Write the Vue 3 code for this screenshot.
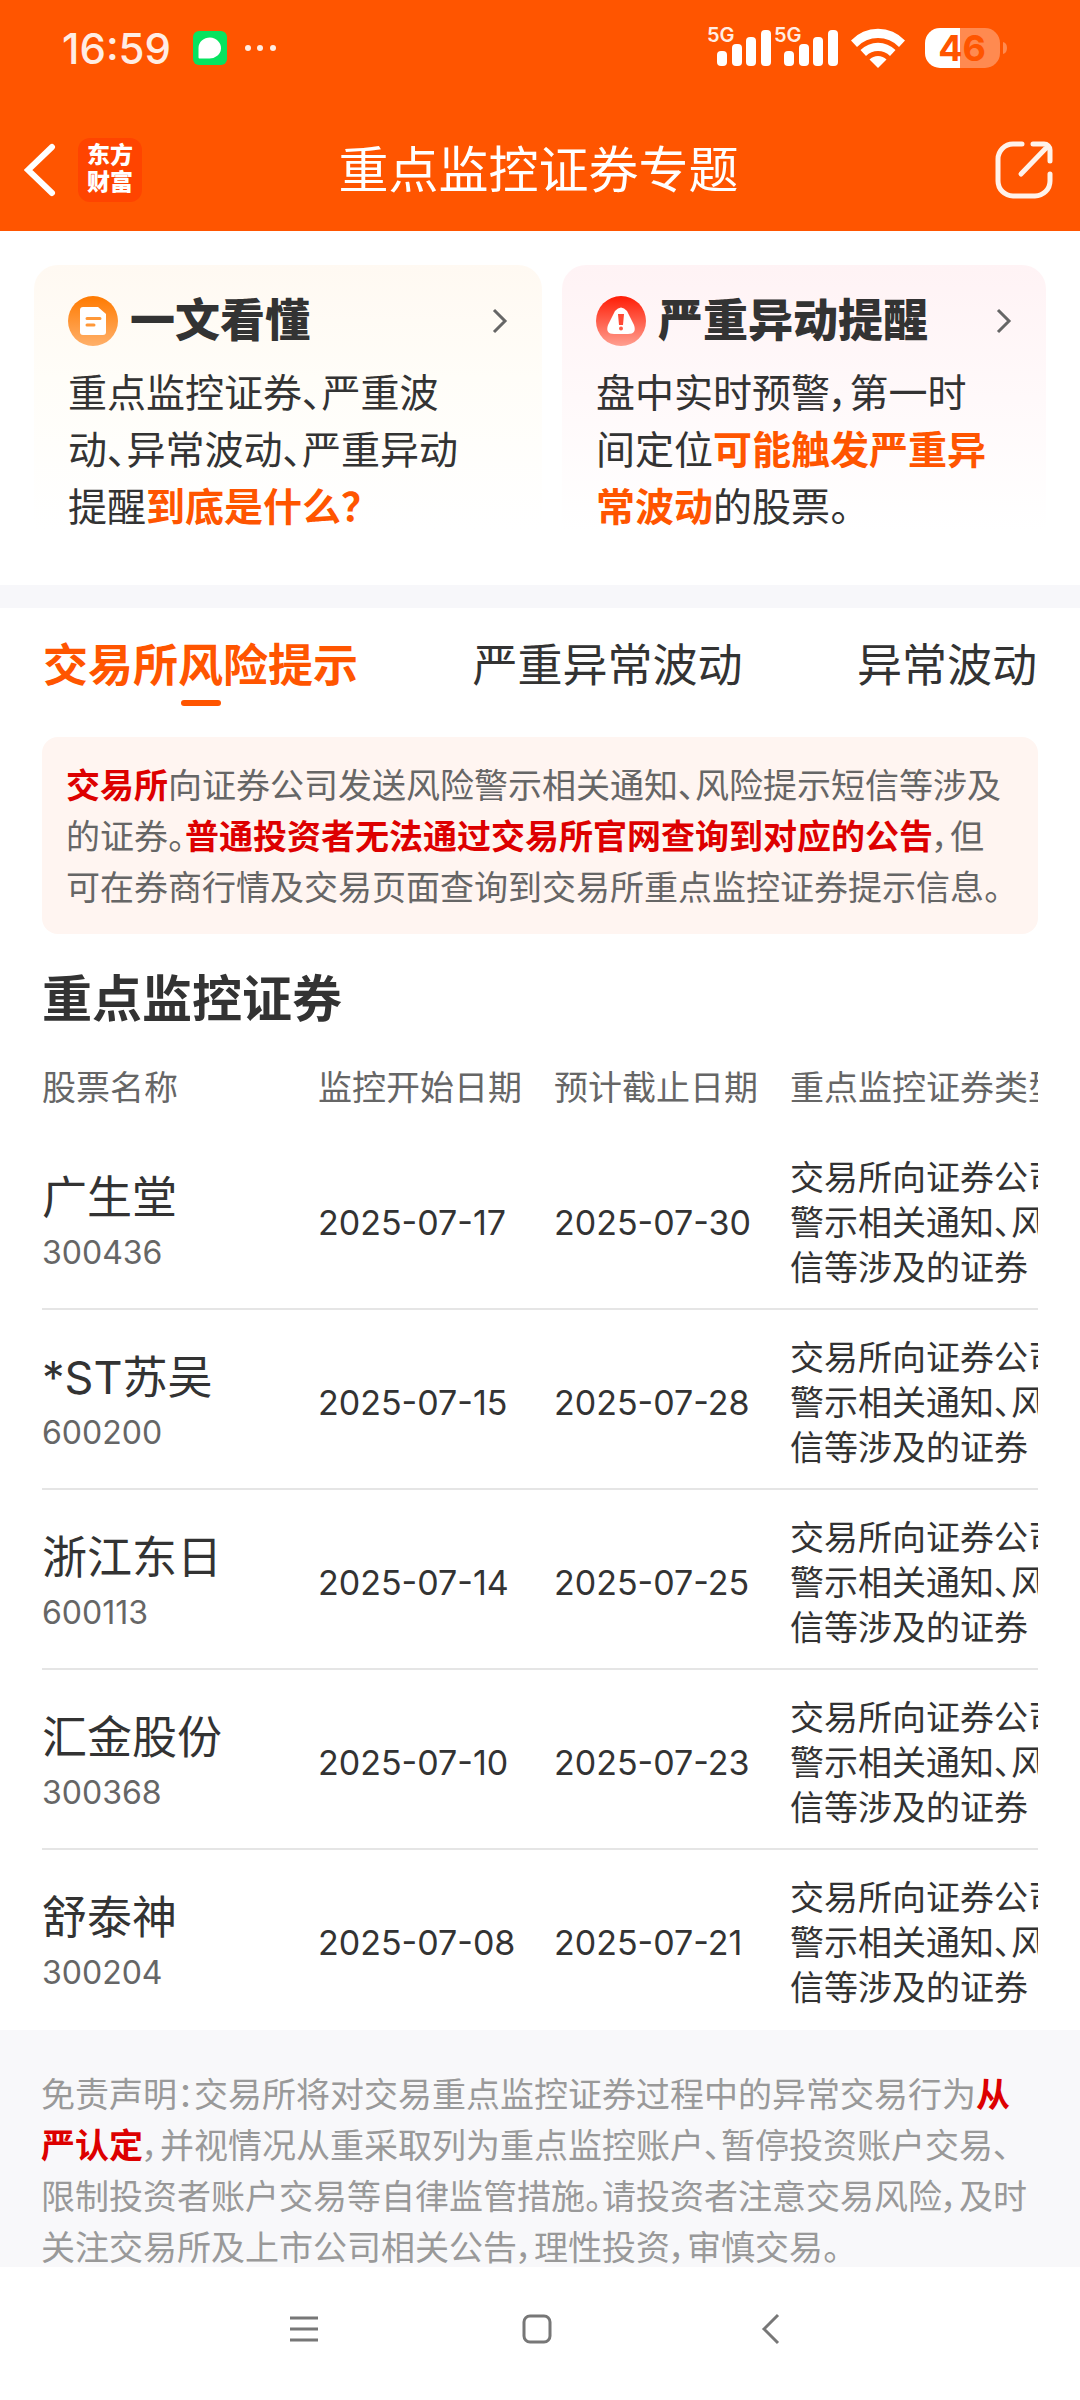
<template>
    <div class="app">
        <header class="header">
            <!-- Status bar -->
            <div class="status">
                <span class="time">16:59</span>
                <svg class="msg" viewBox="0 0 34 34">
                    <rect width="34" height="34" rx="6" fill="#06e35f" />
                    <path d="M17 6.500a11.500 10.500 0 1 1-1 21H6.500a1 1 0 0 1-1-1V17A11.500 10.500 0 0 1 17 6.500z" fill="#fff" />
                </svg>
                <svg class="dots" viewBox="0 0 34 8">
                    <circle cx="4" cy="4" r="3" />
                    <circle cx="16" cy="4" r="3" />
                    <circle cx="29" cy="4" r="3" />
                </svg>
                <div class="status-right">
                    <div v-for="i in 2" :key="i" class="signal">
                        <span>5G</span>
                        <svg viewBox="0 0 54 36">
                            <rect x="0" y="21" width="10" height="15" rx="4" />
                            <rect x="15" y="14" width="10" height="22" rx="4" />
                            <rect x="29" y="7" width="10" height="29" rx="4" />
                            <rect x="44" y="0" width="10" height="36" rx="4" />
                        </svg>
                    </div>
                    <svg class="wifi" viewBox="0 0 54 40">
                        <path d="M0 12.500a37 37 0 0 1 54 0l-6 6.500a29 29 0 0 0-42 0z" />
                        <path d="M9.500 22a25 25 0 0 1 35 0l-5.500 6a17 17 0 0 0-24 0z" />
                        <path d="M18.500 31.500a12 12 0 0 1 17 0L27 40z" />
                    </svg>
                    <svg class="battery" viewBox="0 0 83 40">
                        <path d="M35 0h25a15 15 0 0 1 15 15v10a15 15 0 0 1-15 15H35z" fill="#ff8a50" />
                        <path d="M35 0H15A15 15 0 0 0 0 15v10a15 15 0 0 0 15 15h20z" fill="#fff" />
                        <path d="M78 14q4 1 4 6t-4 6z" fill="#ff8a50" />
                        <text x="37" y="33" text-anchor="middle">46</text>
                    </svg>
                </div>
            </div>

            <div class="navbar">
                <div class="nav-left">
                    <button class="icon-btn" aria-label="返回">
                        <svg class="back" viewBox="0 0 32 54">
                            <path d="M28 4L4 27l24 23" />
                        </svg>
                    </button>
                    <span class="logo">东方<br />财富</span>
                </div>
                <h1>重点监控证券专题</h1>
                <button class="icon-btn share-btn" aria-label="分享">
                    <svg class="share" viewBox="0 0 58 58">
                        <path d="M27 3H18A15 15 0 0 0 3 18v22a15 15 0 0 0 15 15h22a15 15 0 0 0 15-15v-7" />
                        <path d="M38 3h11a6 6 0 0 1 6 6v11M53 5L26 33" />
                    </svg>
                </button>
            </div>
        </header>

        <main class="content">
            <section class="cards">
                <a href="#" class="card card-guide">
                    <div class="card-head">
                        <svg class="card-icon" viewBox="0 0 50 50">
                            <defs>
                                <linearGradient id="orange" x1="0" y1="0" x2="0" y2="1">
                                    <stop offset="0" stop-color="#ff7a00" />
                                    <stop offset="1" stop-color="#ffb06a" />
                                </linearGradient>
                            </defs>
                            <circle cx="25" cy="25" r="25" fill="url(#orange)" />
                            <path d="M15 11h15l8 7v18a3 3 0 0 1-3 3H15a3 3 0 0 1-3-3V14a3 3 0 0 1 3-3z" fill="#fff" />
                            <path d="M19 22.500h13M19 29h7" stroke="#ff9838" stroke-width="3" stroke-linecap="round" />
                        </svg>
                        <h2>一文看懂</h2>
                        <svg class="arrow" viewBox="0 0 16 26"><path d="M2 2l11 11L2 24" /></svg>
                    </div>
                    <p>重点监控证券、严重波动、异常波动、严重异动提醒<b>到底是什么？</b></p>
                </a>
                <a href="#" class="card card-alert">
                    <div class="card-head">
                        <svg class="card-icon" viewBox="0 0 50 50">
                            <defs>
                                <linearGradient id="red" x1="0" y1="0" x2="0" y2="1">
                                    <stop offset="0" stop-color="#ff1c05" />
                                    <stop offset="1" stop-color="#ff9f90" />
                                </linearGradient>
                            </defs>
                            <circle cx="25" cy="25" r="25" fill="url(#red)" />
                            <path d="M19 15q6-7 12 0l7 14q3 9-6 9H18q-9 0-6-9z" fill="#fff" />
                            <path d="M22 18h6l-1 11h-4z" fill="#ff4a35" />
                            <circle cx="25" cy="32.500" r="2" fill="#ff5a45" />
                        </svg>
                        <h2>严重异动提醒</h2>
                        <svg class="arrow" viewBox="0 0 16 26"><path d="M2 2l11 11L2 24" /></svg>
                    </div>
                    <p>盘中实时预警，第一时间定位<b>可能触发严重异常波动</b>的股票。</p>
                </a>
            </section>

            <nav class="tabs">
                <button
                    v-for="(tab, i) in tabs"
                    :key="tab"
                    :class="{ active: current === i }"
                    @click="current = i"
                >
                    {{ tab }}
                </button>
            </nav>

            <p class="notice">
                <b>交易所</b>向证券公司发送风险警示相关通知、风险提示短信等涉及的证券。<b>普通投资者无法通过交易所官网查询到对应的公告</b>，但可在券商行情及交易页面查询到交易所重点监控证券提示信息。
            </p>

            <section class="stocks">
                <h2>重点监控证券</h2>
                <div class="table-wrap">
                    <table>
                        <colgroup>
                            <col class="col-name" />
                            <col class="col-date" />
                            <col class="col-date" />
                            <col class="col-type" />
                        </colgroup>
                        <thead>
                            <tr>
                                <th>股票名称</th>
                                <th>监控开始日期</th>
                                <th>预计截止日期</th>
                                <th>重点监控证券类型</th>
                            </tr>
                        </thead>
                        <tbody>
                            <tr v-for="item in stocks" :key="item.code">
                                <td>
                                    <div class="name">{{ item.name }}</div>
                                    <div class="code">{{ item.code }}</div>
                                </td>
                                <td class="date">{{ item.start }}</td>
                                <td class="date">{{ item.end }}</td>
                                <td>{{ type }}</td>
                            </tr>
                        </tbody>
                    </table>
                </div>
            </section>

            <footer class="disclaimer">
                免责声明：交易所将对交易重点监控证券过程中的异常交易行为<b>从严认定</b>，并视情况从重采取列为重点监控账户、暂停投资账户交易、限制投资者账户交易等自律监管措施。请投资者注意交易风险，及时关注交易所及上市公司相关公告，理性投资，审慎交易。
            </footer>
        </main>

        <!-- System navigation -->
        <div class="sysbar">
            <button class="icon-btn" aria-label="菜单">
                <svg viewBox="0 0 32 32"><path d="M2 5h28M2 16h28M2 27h28" /></svg>
            </button>
            <button class="icon-btn" aria-label="主页">
                <svg viewBox="0 0 32 32"><rect x="3" y="3" width="26" height="26" rx="6" /></svg>
            </button>
            <button class="icon-btn" aria-label="返回上一页">
                <svg viewBox="0 0 32 32"><path d="M24 2L10 16l14 14" /></svg>
            </button>
        </div>
    </div>
</template>

<script setup>
import { ref } from "vue";

const tabs = ["交易所风险提示", "严重异常波动", "异常波动"];
const current = ref(0);

const type = "交易所向证券公司发送风险警示相关通知、风险提示短信等涉及的证券";

const stocks = [
    { name: "广生堂", code: "300436", start: "2025-07-17", end: "2025-07-30" },
    { name: "*ST苏吴", code: "600200", start: "2025-07-15", end: "2025-07-28" },
    { name: "浙江东日", code: "600113", start: "2025-07-14", end: "2025-07-25" },
    { name: "汇金股份", code: "300368", start: "2025-07-10", end: "2025-07-23" },
    { name: "舒泰神", code: "300204", start: "2025-07-08", end: "2025-07-21" },
];
</script>

<style>
body {
    margin: 0;
    background: #fff;
}
</style>

<style scoped>
.app {
    display: flex;
    flex-direction: column;
    height: 100vh;
    font-family: Inter, "Noto Sans CJK SC", sans-serif;
    font-feature-settings: "palt";
    font-size: 34px;
    color: #333;
}
h1,
h2,
p {
    margin: 0;
}
button {
    padding: 0;
    border: 0;
    background: none;
    font: inherit;
    font-feature-settings: inherit;
    color: inherit;
}
.icon-btn {
    display: flex;
    align-items: center;
    justify-content: center;
}

/* header */
.header {
    flex: none;
    background: #ff5500;
    color: #fff;
}
.status {
    display: flex;
    align-items: center;
    height: 96px;
    padding: 0 72px 0 62px;
}
.time {
    font-size: 42px;
    font-weight: 500;
    color: #ffede4;
}
.msg {
    width: 34px;
    height: 34px;
    margin-left: 22px;
}
.dots {
    width: 34px;
    height: 8px;
    margin-left: 17px;
    fill: #ffede4;
}
.status-right {
    display: flex;
    align-items: center;
    margin-left: auto;
}
.signal {
    position: relative;
    margin-right: 13px;
}
.signal svg {
    display: block;
    width: 54px;
    height: 36px;
    fill: #fff;
}
.signal span {
    position: absolute;
    top: -6px;
    left: -10px;
    font-size: 20px;
    line-height: 22px;
    font-weight: 600;
    color: #ffede4;
}
.wifi {
    width: 54px;
    height: 40px;
    fill: #fff;
}
.battery {
    width: 83px;
    height: 40px;
    margin-left: 20px;
}
.battery text {
    font-size: 36px;
    font-weight: 700;
    fill: #ff5500;
}
.navbar {
    display: grid;
    grid-template-columns: 1fr auto 1fr;
    align-items: center;
    height: 123px;
    padding: 12px 27px 0 24px;
}
.nav-left {
    display: flex;
    align-items: center;
    gap: 22px;
}
.back {
    width: 32px;
    height: 54px;
    fill: none;
    stroke: #fff;
    stroke-width: 6;
    stroke-linecap: round;
}
.logo {
    width: 64px;
    padding: 4px 0 6px;
    border-radius: 12px;
    background: #ff4400;
    font-size: 23px;
    line-height: 27px;
    font-weight: 900;
    text-align: center;
}
h1 {
    font-size: 50px;
    line-height: 72px;
    font-weight: 400;
}
.share-btn {
    justify-self: end;
}
.share {
    width: 58px;
    height: 58px;
    fill: none;
    stroke: #fff2ea;
    stroke-width: 5;
    stroke-linecap: round;
}

/* content */
.content {
    flex: 1;
    min-height: 0;
    overflow-x: hidden;
    overflow-y: auto;
    scrollbar-width: none;
}
.cards {
    display: grid;
    grid-template-columns: 508fr 484fr;
    gap: 20px;
    padding: 34px 34px 40px;
    border-bottom: 23px solid #f7f7fa;
}
.card {
    padding: 26px 34px 10px;
    border-radius: 24px;
    color: #333;
    text-decoration: none;
}
.card-guide {
    background: linear-gradient(#fff9f2, #fffdf8 40%, #fff 95%);
}
.card-alert {
    background: linear-gradient(#fff3f5, #fff 95%);
}
.card-head {
    display: flex;
    align-items: center;
    height: 60px;
}
.card-icon {
    width: 50px;
    height: 50px;
}
.card-head h2 {
    margin-left: 12px;
    font-size: 45px;
    line-height: 60px;
    font-weight: 900;
}
.arrow {
    width: 16px;
    height: 26px;
    margin-left: auto;
    fill: none;
    stroke: #666;
    stroke-width: 3;
}
.card p {
    margin-top: 13px;
    padding-right: 24px;
    font-size: 39px;
    line-height: 57px;
}
.card b {
    font-weight: 600;
    color: #ff5500;
}
.tabs {
    display: flex;
    justify-content: space-between;
    align-items: flex-start;
    height: 129px;
    padding: 0 43px;
}
.tabs button {
    display: flex;
    flex-direction: column;
    align-items: center;
    padding-top: 26px;
    font-size: 45px;
    line-height: 64px;
}
.tabs .active {
    font-weight: 600;
    color: #ff5500;
}
.tabs .active::after {
    content: "";
    width: 40px;
    height: 6px;
    margin-top: 2px;
    border-radius: 3px;
    background: #ff5500;
}
.notice {
    margin: 0 42px;
    padding: 23px 24px 21px;
    border-radius: 16px;
    background: #fff5f1;
    line-height: 51px;
    color: #666;
}
.notice b,
.disclaimer b {
    font-weight: 600;
    color: #dd0000;
}

/* table */
.stocks {
    padding: 30px 42px 0;
}
.stocks h2 {
    font-size: 50px;
    line-height: 70px;
    font-weight: 600;
}
.table-wrap {
    overflow: hidden;
}
table {
    width: 1176px;
    table-layout: fixed;
    border-collapse: separate;
    border-spacing: 0;
}
.col-name {
    width: 264px;
}
.col-date {
    width: 236px;
}
.col-type {
    width: 440px;
}
th {
    padding: 29px 12px 17px;
    font-weight: 400;
    line-height: 50px;
    text-align: left;
    white-space: nowrap;
    color: #666;
}
td {
    padding: 25px 12px 18px;
    border-bottom: 2px solid #e5e5e5;
    line-height: 45px;
}
tr:last-child td {
    border-color: transparent;
}
th:first-child,
td:first-child {
    padding-left: 0;
}
.name {
    font-size: 45px;
    line-height: 60px;
}
.code {
    font-size: 32px;
    line-height: 50px;
    color: #666;
}
.disclaimer {
    padding: 39px 41px;
    background: #f8f8fa;
    line-height: 51px;
    color: #999;
}

.sysbar {
    flex: none;
    display: flex;
    justify-content: center;
    gap: 137px;
    height: 124px;
    padding: 0 6px 9px 0;
    background: #fff;
}
.sysbar .icon-btn {
    width: 96px;
}
.sysbar svg {
    width: 32px;
    height: 32px;
    fill: none;
    stroke: #777;
    stroke-width: 3;
}
</style>
